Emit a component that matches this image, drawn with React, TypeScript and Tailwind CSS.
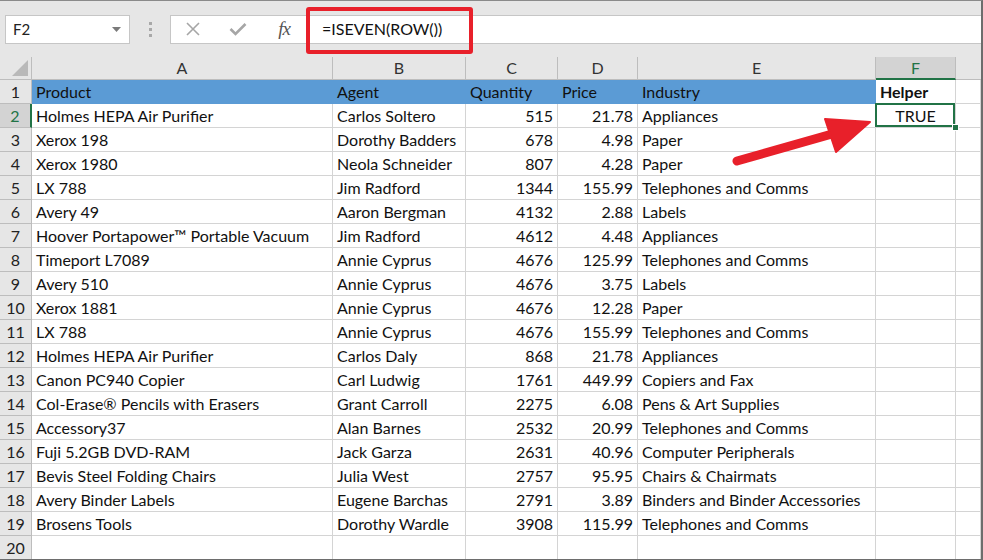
import React from "react";

type Row = [string, string, string, string, string];

const rows: Row[] = [
  ["Holmes HEPA Air Purifier", "Carlos Soltero", "515", "21.78", "Appliances"],
  ["Xerox 198", "Dorothy Badders", "678", "4.98", "Paper"],
  ["Xerox 1980", "Neola Schneider", "807", "4.28", "Paper"],
  ["LX 788", "Jim Radford", "1344", "155.99", "Telephones and Comms"],
  ["Avery 49", "Aaron Bergman", "4132", "2.88", "Labels"],
  ["Hoover Portapower™ Portable Vacuum", "Jim Radford", "4612", "4.48", "Appliances"],
  ["Timeport L7089", "Annie Cyprus", "4676", "125.99", "Telephones and Comms"],
  ["Avery 510", "Annie Cyprus", "4676", "3.75", "Labels"],
  ["Xerox 1881", "Annie Cyprus", "4676", "12.28", "Paper"],
  ["LX 788", "Annie Cyprus", "4676", "155.99", "Telephones and Comms"],
  ["Holmes HEPA Air Purifier", "Carlos Daly", "868", "21.78", "Appliances"],
  ["Canon PC940 Copier", "Carl Ludwig", "1761", "449.99", "Copiers and Fax"],
  ["Col-Erase® Pencils with Erasers", "Grant Carroll", "2275", "6.08", "Pens & Art Supplies"],
  ["Accessory37", "Alan Barnes", "2532", "20.99", "Telephones and Comms"],
  ["Fuji 5.2GB DVD-RAM", "Jack Garza", "2631", "40.96", "Computer Peripherals"],
  ["Bevis Steel Folding Chairs", "Julia West", "2757", "95.95", "Chairs & Chairmats"],
  ["Avery Binder Labels", "Eugene Barchas", "2791", "3.89", "Binders and Binder Accessories"],
  ["Brosens Tools", "Dorothy Wardle", "3908", "115.99", "Telephones and Comms"],
];

const cols = "grid-cols-[32px_301px_133px_92px_80px_238px_80px_1fr]";
const cell = "h-[24px] border-r border-b border-[#d4d4d4] px-[4px] flex items-center whitespace-nowrap overflow-hidden";
const rowHead =
  "h-[24px] border-r border-b border-[#bdbdbd] bg-[#e6e6e6] flex items-center justify-center text-[#222]";

const Toolbar = () => (
  <div className="relative h-[56px] bg-[#e6e6e6] flex items-center">
    {/* Name box */}
    <div className="ml-[5px] w-[125px] h-[29px] bg-white border border-[#c6c6c6] flex items-center justify-between pl-[7px] pr-[8px] text-[15px] text-[#222]">
      <span>F2</span>
      <svg width="9" height="5" viewBox="0 0 9 5">
        <path d="M0 0 L9 0 L4.5 5 Z" fill="#7a7a7a" />
      </svg>
    </div>
    {/* Grip dots */}
    <div className="w-[40px] flex flex-col items-center gap-[3px]">
      <div className="w-[3px] h-[3px] bg-[#a8a8a8]" />
      <div className="w-[3px] h-[3px] bg-[#a8a8a8]" />
      <div className="w-[3px] h-[3px] bg-[#a8a8a8]" />
    </div>
    {/* Formula bar */}
    <div className="flex-1 h-[29px] bg-white border border-[#c6c6c6] border-r-0 flex items-center">
      <div className="w-[42px] flex justify-center ml-[1px]">
        <svg width="16" height="16" viewBox="0 0 16 16">
          <path d="M2 2 L14 14 M14 2 L2 14" stroke="#a6a6a6" strokeWidth="1.6" />
        </svg>
      </div>
      <div className="w-[48px] flex justify-center">
        <svg width="18" height="14" viewBox="0 0 18 14">
          <path d="M1.5 7 L6.5 12 L16.5 2" stroke="#a6a6a6" strokeWidth="2.6" fill="none" />
        </svg>
      </div>
      <div className="w-[44px] flex justify-center text-[19px] italic text-[#555] font-['Liberation_Serif',serif] tracking-[-1px]">
        fx
      </div>
      <div className="ml-[16px] text-[16px] text-[#111] font-['Lato',sans-serif]">=ISEVEN(ROW())</div>
    </div>
    {/* Highlight box */}
    <div className="absolute left-[306px] top-[6px] w-[167px] h-[47px] border-[4px] border-[#e8202a] rounded-[3px]" />
  </div>
);

export default function App() {
  return (
    <div className="w-[983px] h-[560px] overflow-hidden bg-white border-t border-t-[#8a8a8a] border-r-2 border-r-[#6d6d6d] border-b border-b-[#6d6d6d] font-['Lato',sans-serif] text-[16px] text-[#111] relative">
      <Toolbar />
      <div className={`grid ${cols}`}>
        {/* Column headers */}
        <div className="h-[23px] bg-[#e6e6e6] border-r border-b border-[#bdbdbd] relative">
          <svg className="absolute right-[3px] bottom-[3px]" width="16" height="16" viewBox="0 0 16 16">
            <path d="M16 0 L16 16 L0 16 Z" fill="#b9b9b9" />
          </svg>
        </div>
        {["A", "B", "C", "D", "E"].map((c) => (
          <div
            key={c}
            className="h-[23px] bg-[#e6e6e6] border-r border-b border-[#bdbdbd] flex items-center justify-center text-[#333]"
          >
            {c}
          </div>
        ))}
        <div className="h-[23px] bg-[#d3d3d3] border-r border-[#bdbdbd] border-b-2 border-b-[#217346] flex items-center justify-center text-[#217346]">
          F
        </div>
        <div className="h-[23px] bg-[#e6e6e6] border-b border-[#bdbdbd]" />

        {/* Row 1 */}
        <div className={rowHead}>1</div>
        {["Product", "Agent", "Quantity", "Price", "Industry"].map((h, i) => (
          <div
            key={h}
            className={`h-[24px] bg-[#5b9bd5] px-[4px] flex items-center border-b border-[#5b9bd5] ${i < 4 ? "" : "border-r border-r-[#5b9bd5]"}`}
          >
            {h}
          </div>
        ))}
        <div className={`${cell} font-bold`}>Helper</div>
        <div className={cell} />

        {/* Data rows */}
        {rows.map((r, idx) => {
          const n = idx + 2;
          const sel = n === 2;
          return (
            <React.Fragment key={n}>
              <div
                className={
                  sel
                    ? "h-[24px] border-b border-[#bdbdbd] border-r-2 border-r-[#217346] bg-[#d3d3d3] flex items-center justify-center text-[#217346]"
                    : rowHead
                }
              >
                {n}
              </div>
              <div className={cell}>{r[0]}</div>
              <div className={cell}>{r[1]}</div>
              <div className={`${cell} justify-end`}>{r[2]}</div>
              <div className={`${cell} justify-end`}>{r[3]}</div>
              <div className={cell}>{r[4]}</div>
              <div className={`${cell} relative overflow-visible justify-center`}>
                {sel && (
                  <>
                    <div className="absolute -left-[1px] -top-[1px] right-0 bottom-0 border-2 border-[#217346]" />
                    <div className="absolute -right-[4px] -bottom-[4px] w-[7px] h-[7px] bg-[#217346] border border-white z-10" />
                    <span>TRUE</span>
                  </>
                )}
              </div>
              <div className={cell} />
            </React.Fragment>
          );
        })}

        {/* Row 20 */}
        <div className={rowHead}>20</div>
        {[0, 1, 2, 3, 4, 5, 6].map((i) => (
          <div key={i} className={cell} />
        ))}
      </div>

      {/* Annotation arrow */}
      <svg className="absolute left-0 top-0 pointer-events-none" width="983" height="560" viewBox="0 0 983 560">
        <path d="M737 160 L832 133" stroke="#e8202a" strokeWidth="9" strokeLinecap="round" />
        <path d="M870 121 L825 118 L836 151 Z" fill="#e8202a" stroke="#e8202a" strokeWidth="2" strokeLinejoin="round" />
      </svg>
    </div>
  );
}
